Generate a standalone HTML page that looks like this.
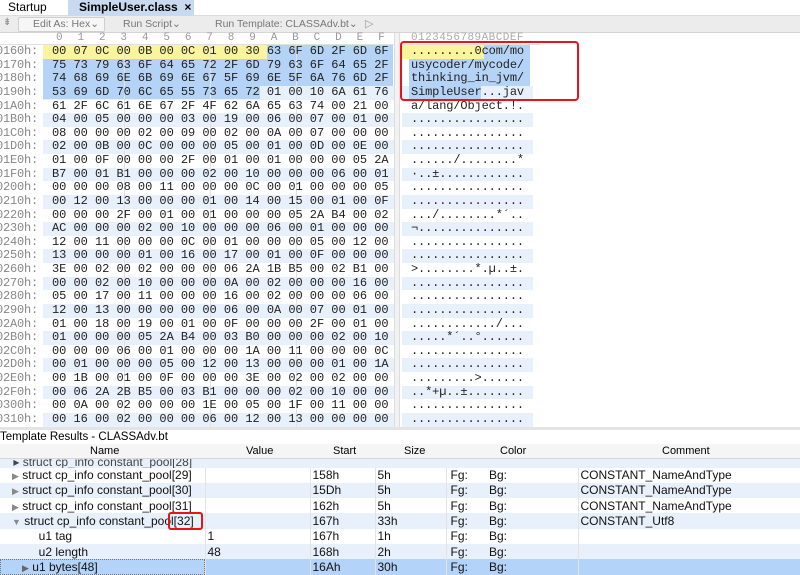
<!DOCTYPE html>
<html><head><meta charset="utf-8"><style>
*{margin:0;padding:0;box-sizing:border-box}
body{width:800px;height:575px;overflow:hidden;background:#fff;font-family:"Liberation Sans",sans-serif;position:relative}
.abs{position:absolute}
.mono{font-family:"Liberation Mono",monospace;font-size:11px}
#rows{position:absolute;left:0;top:45px;width:800px}
.r{position:relative;height:13.63px;line-height:13.63px;white-space:pre}
.r span{z-index:2}
.r .ad{position:absolute;left:-4px;color:#888;font-family:"Liberation Mono",monospace;font-size:12px;letter-spacing:-.2px}
.r .hx{position:absolute;left:52px;font-family:"Liberation Mono",monospace;font-size:12px;letter-spacing:-.04px;color:#222}
.r .as{position:absolute;left:411px;font-family:"Liberation Mono",monospace;font-size:12px;letter-spacing:-.14px;color:#222}
.r.o::before{content:"";position:absolute;z-index:0;left:43px;width:351px;top:0;bottom:0;background:#e8f0fb}
.r.o::after{content:"";position:absolute;z-index:0;left:402px;width:131px;top:0;bottom:0;background:#e8f0fb}
.sel{position:absolute;background:#b4d3f6;z-index:1}
.yel{position:absolute;background:#faf59c;z-index:1}
.vl{position:absolute;top:45px;height:382px;width:1px;background:#dfe3ea;z-index:1}
table{border-collapse:collapse;font-size:12px;width:800px;table-layout:fixed}
td{height:15.3px;padding:0 0 0 2px;white-space:nowrap;overflow:hidden;border-right:1px solid #e3e3e3;color:#111}
</style></head><body>
<div class="abs" style="left:0;top:0;width:800px;height:16px;background:#fff;border-bottom:1px solid #ddd"></div>
<div class="abs" style="left:8px;top:0;font-size:12px;line-height:15px">Startup</div>
<div class="abs" style="left:68px;top:0;width:126px;height:16px;background:#c7daef"></div>
<div class="abs" style="left:79px;top:0;font-size:12px;font-weight:bold;line-height:15px">SimpleUser.class&nbsp; ×</div>
<div class="abs" style="left:0;top:16px;width:800px;height:17px;background:#ececec;border-bottom:1px solid #d5d5d5"></div>
<div class="abs" style="left:3px;top:17px;font-size:10px;color:#888">⇟</div>
<div class="abs" style="left:18px;top:17px;width:87px;height:15px;background:#f6f6f6;border:1px solid #cfcfcf;border-radius:2px"></div>
<div class="abs" style="left:33px;top:18px;font-size:10.5px;color:#777">Edit As: Hex⌄</div>
<div class="abs" style="left:123px;top:18px;font-size:10.5px;color:#777">Run Script⌄</div>
<div class="abs" style="left:215px;top:18px;font-size:10.5px;color:#777">Run Template: CLASSAdv.bt⌄</div>
<div class="abs" style="left:365px;top:17px;font-size:11px;color:#999">▷</div>
<div class="abs mono" style="left:56px;top:32px;letter-spacing:14.87px;color:#999;line-height:12px">0123456789ABCDEF</div>
<div class="abs mono" style="left:411px;top:32px;letter-spacing:.46px;color:#aaa;line-height:12px">0123456789ABCDEF</div>
<div class="abs" style="left:0;top:44px;width:540px;height:1px;background:#e0e0e0"></div>
<div class="abs" style="left:394px;top:33px;width:6px;height:395px;background:#f2f2f2;border-left:1px solid #ddd;border-right:1px solid #ddd"></div>
<div class="yel" style="left:43px;top:45px;width:224px;height:13.6px"></div>
<div class="sel" style="left:267px;top:45px;width:126px;height:13.6px"></div>
<div class="sel" style="left:43px;top:58.6px;width:350px;height:27.3px"></div>
<div class="sel" style="left:43px;top:85.9px;width:217px;height:13.6px"></div>
<div class="yel" style="left:402px;top:45px;width:82px;height:13.6px"></div>
<div class="sel" style="left:484px;top:45px;width:46px;height:13.6px"></div>
<div class="sel" style="left:409px;top:58.6px;width:121px;height:27.3px"></div>
<div class="sel" style="left:409px;top:85.9px;width:72px;height:13.6px"></div>
<div class="vl" style="left:124px"></div><div class="vl" style="left:210px"></div><div class="vl" style="left:296px"></div>
<div id="rows">
<div class="r"><span class="ad">0160h:</span><span class="hx">00 07 0C 00 0B 00 0C 01 00 30 63 6F 6D 2F 6D 6F</span><span class="as">.........0com/mo</span></div>
<div class="r"><span class="ad">0170h:</span><span class="hx">75 73 79 63 6F 64 65 72 2F 6D 79 63 6F 64 65 2F</span><span class="as">usycoder/mycode/</span></div>
<div class="r"><span class="ad">0180h:</span><span class="hx">74 68 69 6E 6B 69 6E 67 5F 69 6E 5F 6A 76 6D 2F</span><span class="as">thinking_in_jvm/</span></div>
<div class="r o"><span class="ad">0190h:</span><span class="hx">53 69 6D 70 6C 65 55 73 65 72 01 00 10 6A 61 76</span><span class="as">SimpleUser...jav</span></div>
<div class="r"><span class="ad">01A0h:</span><span class="hx">61 2F 6C 61 6E 67 2F 4F 62 6A 65 63 74 00 21 00</span><span class="as">a/lang/Object.!.</span></div>
<div class="r o"><span class="ad">01B0h:</span><span class="hx">04 00 05 00 00 00 03 00 19 00 06 00 07 00 01 00</span><span class="as">................</span></div>
<div class="r"><span class="ad">01C0h:</span><span class="hx">08 00 00 00 02 00 09 00 02 00 0A 00 07 00 00 00</span><span class="as">................</span></div>
<div class="r o"><span class="ad">01D0h:</span><span class="hx">02 00 0B 00 0C 00 00 00 05 00 01 00 0D 00 0E 00</span><span class="as">................</span></div>
<div class="r"><span class="ad">01E0h:</span><span class="hx">01 00 0F 00 00 00 2F 00 01 00 01 00 00 00 05 2A</span><span class="as">....../........*</span></div>
<div class="r o"><span class="ad">01F0h:</span><span class="hx">B7 00 01 B1 00 00 00 02 00 10 00 00 00 06 00 01</span><span class="as">·..±............</span></div>
<div class="r"><span class="ad">0200h:</span><span class="hx">00 00 00 08 00 11 00 00 00 0C 00 01 00 00 00 05</span><span class="as">................</span></div>
<div class="r o"><span class="ad">0210h:</span><span class="hx">00 12 00 13 00 00 00 01 00 14 00 15 00 01 00 0F</span><span class="as">................</span></div>
<div class="r"><span class="ad">0220h:</span><span class="hx">00 00 00 2F 00 01 00 01 00 00 00 05 2A B4 00 02</span><span class="as">.../........*´..</span></div>
<div class="r o"><span class="ad">0230h:</span><span class="hx">AC 00 00 00 02 00 10 00 00 00 06 00 01 00 00 00</span><span class="as">¬...............</span></div>
<div class="r"><span class="ad">0240h:</span><span class="hx">12 00 11 00 00 00 0C 00 01 00 00 00 05 00 12 00</span><span class="as">................</span></div>
<div class="r o"><span class="ad">0250h:</span><span class="hx">13 00 00 00 01 00 16 00 17 00 01 00 0F 00 00 00</span><span class="as">................</span></div>
<div class="r"><span class="ad">0260h:</span><span class="hx">3E 00 02 00 02 00 00 00 06 2A 1B B5 00 02 B1 00</span><span class="as">&gt;........*.µ..±.</span></div>
<div class="r o"><span class="ad">0270h:</span><span class="hx">00 00 02 00 10 00 00 00 0A 00 02 00 00 00 16 00</span><span class="as">................</span></div>
<div class="r"><span class="ad">0280h:</span><span class="hx">05 00 17 00 11 00 00 00 16 00 02 00 00 00 06 00</span><span class="as">................</span></div>
<div class="r o"><span class="ad">0290h:</span><span class="hx">12 00 13 00 00 00 00 00 06 00 0A 00 07 00 01 00</span><span class="as">................</span></div>
<div class="r"><span class="ad">02A0h:</span><span class="hx">01 00 18 00 19 00 01 00 0F 00 00 00 2F 00 01 00</span><span class="as">............/...</span></div>
<div class="r o"><span class="ad">02B0h:</span><span class="hx">01 00 00 00 05 2A B4 00 03 B0 00 00 00 02 00 10</span><span class="as">.....*´..°......</span></div>
<div class="r"><span class="ad">02C0h:</span><span class="hx">00 00 00 06 00 01 00 00 00 1A 00 11 00 00 00 0C</span><span class="as">................</span></div>
<div class="r o"><span class="ad">02D0h:</span><span class="hx">00 01 00 00 00 05 00 12 00 13 00 00 00 01 00 1A</span><span class="as">................</span></div>
<div class="r"><span class="ad">02E0h:</span><span class="hx">00 1B 00 01 00 0F 00 00 00 3E 00 02 00 02 00 00</span><span class="as">.........&gt;......</span></div>
<div class="r o"><span class="ad">02F0h:</span><span class="hx">00 06 2A 2B B5 00 03 B1 00 00 00 02 00 10 00 00</span><span class="as">..*+µ..±........</span></div>
<div class="r"><span class="ad">0300h:</span><span class="hx">00 0A 00 02 00 00 00 1E 00 05 00 1F 00 11 00 00</span><span class="as">................</span></div>
<div class="r o"><span class="ad">0310h:</span><span class="hx">00 16 00 02 00 00 00 06 00 12 00 13 00 00 00 00</span><span class="as">................</span></div>
</div>
<div class="abs" style="left:400px;top:41px;width:179px;height:60px;border:2px solid #e8141c;border-radius:4px;z-index:3"></div>
<div class="abs" style="left:0;top:427px;width:800px;height:3px;background:#e4e4e4"></div>
<div class="abs" style="left:0;top:430px;width:800px;height:14px;background:#fff;font-size:11.5px;line-height:14px">Template Results - CLASSAdv.bt</div>
<div class="abs" style="left:0;top:444px;width:800px;height:15px;background:#f5f5f5;border-bottom:1px solid #d6d6d6;font-size:11px;line-height:15px">
<span class="abs" style="left:90px">Name</span><span class="abs" style="left:246px">Value</span><span class="abs" style="left:333px">Start</span><span class="abs" style="left:404px">Size</span><span class="abs" style="left:500px">Color</span><span class="abs" style="left:662px">Comment</span>
</div>
<div class="abs" style="left:0;top:459px;width:800px;height:8.5px;background:#e8f0fb;overflow:hidden;font-size:12px;line-height:6px;color:#444">&nbsp;&nbsp;&nbsp;&nbsp;▸ struct cp_info constant_pool[28]</div>
<table class="abs" style="left:0;top:467.5px">
<colgroup><col style="width:205px"><col style="width:105px"><col style="width:65px"><col style="width:71px"><col style="width:41px"><col style="width:91px"><col style="width:222px"></colgroup>
<tr><td><span style="color:#888;font-size:9px">&nbsp;&nbsp;&nbsp;&nbsp;▶</span> struct cp_info constant_pool[29]</td><td></td><td>158h</td><td>5h</td><td style="border:0;padding-left:4px">Fg:</td><td>Bg:</td><td>CONSTANT_NameAndType</td></tr>
<tr style="background:#e8f0fb"><td><span style="color:#888;font-size:9px">&nbsp;&nbsp;&nbsp;&nbsp;▶</span> struct cp_info constant_pool[30]</td><td></td><td>15Dh</td><td>5h</td><td style="border:0;padding-left:4px">Fg:</td><td>Bg:</td><td>CONSTANT_NameAndType</td></tr>
<tr><td><span style="color:#888;font-size:9px">&nbsp;&nbsp;&nbsp;&nbsp;▶</span> struct cp_info constant_pool[31]</td><td></td><td>162h</td><td>5h</td><td style="border:0;padding-left:4px">Fg:</td><td>Bg:</td><td>CONSTANT_NameAndType</td></tr>
<tr style="background:#e8f0fb"><td><span style="color:#888;font-size:9px">&nbsp;&nbsp;&nbsp;&nbsp;▼</span> struct cp_info constant_pool[32]</td><td></td><td>167h</td><td>33h</td><td style="border:0;padding-left:4px">Fg:</td><td>Bg:</td><td>CONSTANT_Utf8</td></tr>
<tr><td>&nbsp;&nbsp;&nbsp;&nbsp;&nbsp;&nbsp;&nbsp;&nbsp;&nbsp;&nbsp;&nbsp;u1 tag</td><td>1</td><td>167h</td><td>1h</td><td style="border:0;padding-left:4px">Fg:</td><td>Bg:</td><td></td></tr>
<tr style="background:#e8f0fb"><td>&nbsp;&nbsp;&nbsp;&nbsp;&nbsp;&nbsp;&nbsp;&nbsp;&nbsp;&nbsp;&nbsp;u2 length</td><td>48</td><td>168h</td><td>2h</td><td style="border:0;padding-left:4px">Fg:</td><td>Bg:</td><td></td></tr>
<tr style="background:#b4d3f8"><td style="outline:1px dotted #777;outline-offset:-1px"><span style="color:#666;font-size:9px">&nbsp;&nbsp;&nbsp;&nbsp;&nbsp;&nbsp;&nbsp;&nbsp;▶</span> u1 bytes[48]</td><td></td><td>16Ah</td><td>30h</td><td style="border:0;padding-left:4px">Fg:</td><td>Bg:</td><td></td></tr>
</table>
<div class="abs" style="left:168px;top:512px;width:35px;height:18px;border:2px solid #e8141c;border-radius:3px"></div>
</body></html>
